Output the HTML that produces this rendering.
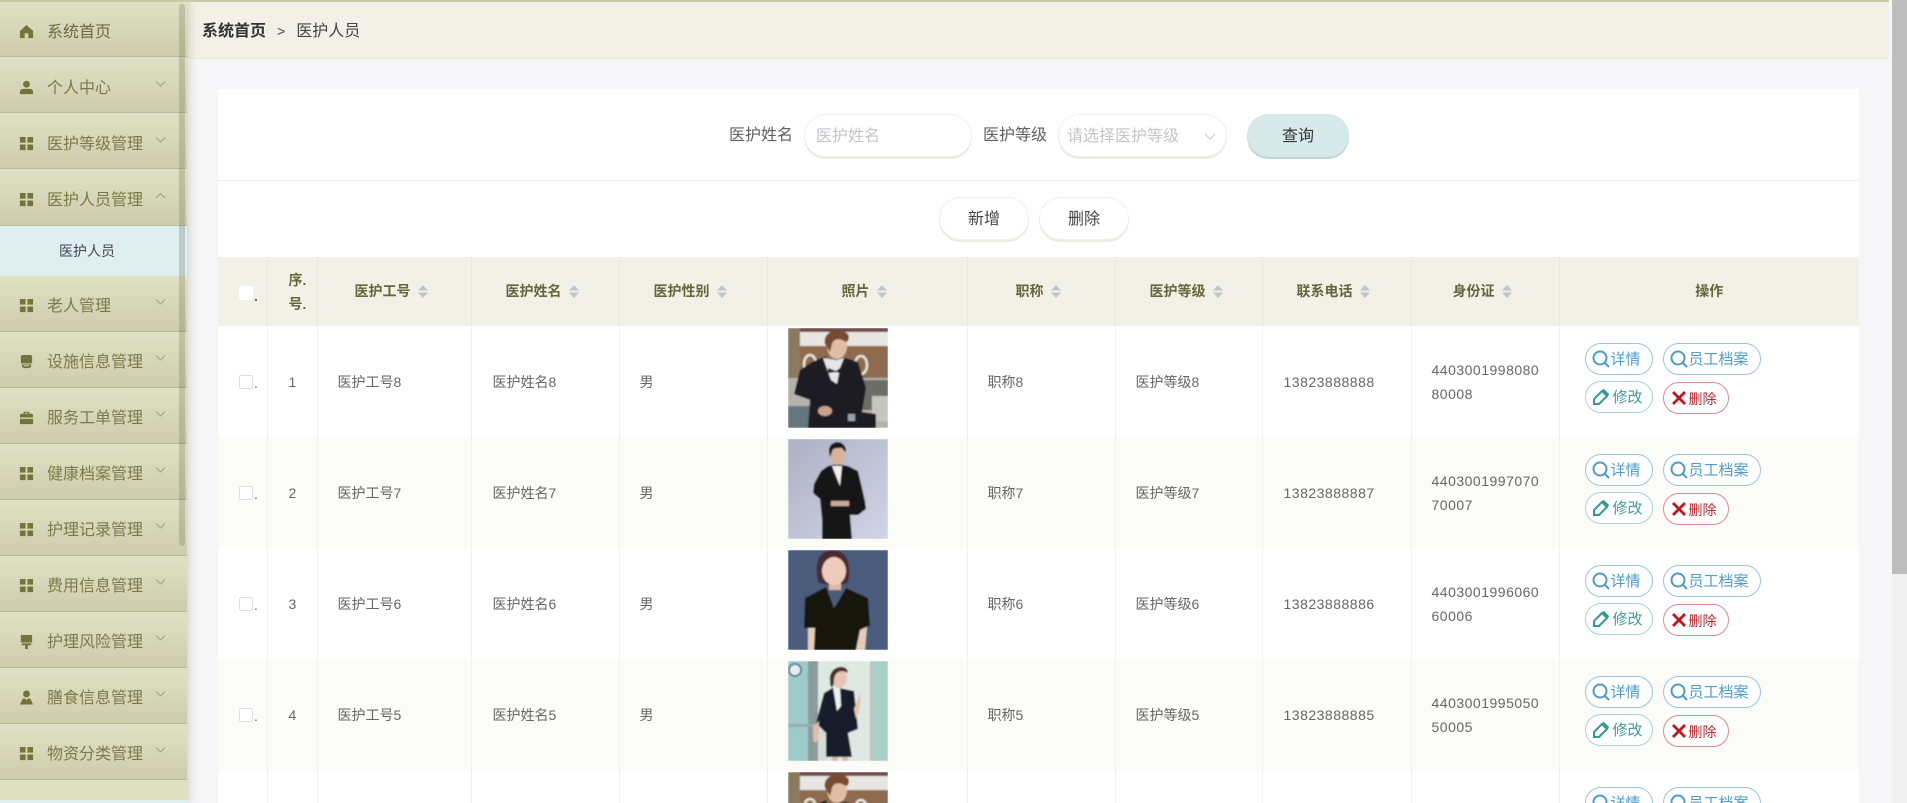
<!DOCTYPE html>
<html lang="zh">
<head>
<meta charset="utf-8">
<title>医护人员</title>
<style>
*{box-sizing:border-box}
html,body{margin:0;padding:0;width:1907px;height:803px;overflow:hidden;background:#f5f5f8;font-family:"Liberation Sans","Noto Sans CJK SC",sans-serif;color:#666}
#wrap{position:absolute;left:0;top:0;width:1907px;height:803px;overflow:hidden;background:#f6f6f8}
.abs{position:absolute}
#side{position:absolute;left:0;top:0;width:187px;height:803px;overflow:hidden;background:#dfdfc2;box-shadow:2px 0 8px rgba(120,120,90,.3);z-index:5}
.mi{position:absolute;left:0;width:187px;height:56px;background:linear-gradient(#e0e0c4,#cdcdad);border-bottom:1px solid #b9b998;font-size:16px;color:#7b7b47;line-height:64px;padding-left:47px;white-space:nowrap;overflow:hidden}
.mi svg.ic{position:absolute;left:19px;top:23px;width:15px;height:15px;fill:#74733a}
.mi svg.ar{position:absolute;left:155px;top:23px;width:11px;height:8px;fill:none;stroke:#a3a37c;stroke-width:1}
.mi.l{line-height:62px}
.mi.l svg.ic{top:22px}
.mi.l svg.ar{top:22px}
#sbar{position:absolute;left:179px;top:4px;width:6px;height:542px;background:rgba(110,110,90,.28);border-radius:3px}
#top{position:absolute;left:0;top:0;width:1889px;height:2px;background:#c9caa4;z-index:6}
#hd{position:absolute;left:187px;top:2px;width:1702px;height:57px;background:#f1f1e8;border-bottom:1px solid #eaeae2;font-size:16px;line-height:58px;color:#444;padding-left:15px;white-space:nowrap;overflow:hidden}
#hd b{color:#333}
#hd i{font-style:normal;font-size:14px;margin:0 11px 0 11px}
#card{position:absolute;left:218px;top:89px;width:1641px;height:714px;background:#fff;border:0}
.inp{position:absolute;height:43px;background:#fff;border:1px solid #f0f0ea;border-radius:22px;box-shadow:0 2px 0 #ebebdf;font-size:16px;line-height:43px;color:#c3c5ca;white-space:nowrap}
.lb{position:absolute;font-size:16px;color:#606060;line-height:24px;white-space:nowrap}
.btn{position:absolute;height:43px;background:#fff;border:1px solid #f0f0ea;border-radius:22px;box-shadow:0 2px 0 #ebebdf;font-size:16px;line-height:43px;text-align:center;color:#444}
table{position:absolute;left:218px;top:257px;width:1641px;border-collapse:collapse;table-layout:fixed;z-index:2}
th{height:69px;background:#f1f1e8;border-right:1px solid #e7e7dc;font-size:14px;font-weight:bold;color:#66663a;text-align:left;padding:0 0 2px 0;white-space:nowrap;line-height:24px}
td{height:111px;border-right:1px solid #f1f1ee;font-size:14px;color:#666;padding:0 0 0 20px;white-space:nowrap;line-height:24px;position:relative}
tr:nth-child(even) td{background:#fbfbf7}
th:last-child,td:last-child{border-right:0}
tr.cut td{height:33px}
.so{display:inline-block;vertical-align:-2px;margin-left:7px;width:10px;height:13px}
.so svg{display:block;fill:#c0c4cc}
.cb{position:absolute;left:21px;width:14px;height:14px;border:1px solid #dcdfe6;border-radius:2px;background:#fff}
.dt{position:absolute;left:36px;color:#666}
.ls{letter-spacing:.5px}
.ph{position:absolute;left:20px;top:2px;width:100px;height:100px;display:block}
.bb{position:absolute;height:32px;border:1px solid;border-radius:16px;background:#fff;font-size:15px;line-height:32px;white-space:nowrap}
.bb svg{position:absolute;left:6px;top:6px;width:18px;height:18px;fill:none}
.bb span{position:absolute;left:25px;top:0}
.b1{left:25px;width:68px;border-color:#9cc6d8;color:#4e9ccb}
.b2{left:103px;width:98px;border-color:#9cc6d8;color:#4e9ccb}
.b3{left:25px;width:68px;border-color:#a9d3d6;color:#3f9c98}
.b3 span{left:27px}
.b4{left:103px;width:66px;border-color:#d98c92;color:#b32a30;font-size:14px}
.clip{position:absolute;left:0;top:0;width:299px;height:33px;overflow:hidden}
#vb{position:absolute;left:1892px;top:0;width:15px;height:803px;background:#f1f1f1}
#vt{position:absolute;left:1892px;top:0;width:15px;height:574px;background:#bdbdbd}
</style>
</head>
<body>
<div id="wrap">
<div id="top"></div>

<div id="side">
  <div class="mi" style="top:3px;height:54px;line-height:60px;color:#6b6b3b;"><svg class="ic" viewBox="0 0 16 16" style="top:21px"><path d="M8 1 1 7.500V15h5v-5h4v5h5V7.500z"/></svg>系统首页</div>
  <div class="mi" style="top:57px"><svg class="ic" viewBox="0 0 16 16"><circle cx="8" cy="4.500" r="3.600"/><path d="M1 15v-2.500C1 10.500 3 9.500 5 9.500h6c2 0 4 1 4 3V15z"/></svg>个人中心<svg class="ar" viewBox="0 0 11 8"><path d="M1 1.500 5.500 6 10 1.500"/></svg></div>
  <div class="mi" style="top:113px"><svg class="ic" viewBox="0 0 16 16"><path d="M1 1h6v6H1zM9 1h6v6H9zM1 9h6v6H1zM9 9h6v6H9z"/></svg>医护等级管理<svg class="ar" viewBox="0 0 11 8"><path d="M1 1.500 5.500 6 10 1.500"/></svg></div>
  <div class="mi" style="top:169px;height:57px"><svg class="ic" viewBox="0 0 16 16"><path d="M1 1h6v6H1zM9 1h6v6H9zM1 9h6v6H1zM9 9h6v6H9z"/></svg>医护人员管理<svg class="ar" viewBox="0 0 11 8"><path d="M1 6 5.500 1.500 10 6"/></svg></div>
  <div class="abs" style="left:0;top:226px;width:187px;height:50px;background:#deeef1;font-size:14px;line-height:50px;padding-left:59px;color:#445">医护人员</div>
  <div class="mi l" style="top:276px"><svg class="ic" viewBox="0 0 16 16"><path d="M1 1h6v6H1zM9 1h6v6H9zM1 9h6v6H1zM9 9h6v6H9z"/></svg>老人管理<svg class="ar" viewBox="0 0 11 8"><path d="M1 1.500 5.500 6 10 1.500"/></svg></div>
  <div class="mi l" style="top:332px"><svg class="ic" viewBox="0 0 16 16"><path d="M2 3c0-1 1-2 2-2h8c1 0 2 1 2 2v7H2zM3 11h10v1c0 2-1 3-3 3H6c-2 0-3-1-3-3zM5 12v1h6v-1z"/></svg>设施信息管理<svg class="ar" viewBox="0 0 11 8"><path d="M1 1.500 5.500 6 10 1.500"/></svg></div>
  <div class="mi l" style="top:388px"><svg class="ic" viewBox="0 0 16 16"><path d="M5 4V2h6v2h2.500L15 5v3H1V5l1.500-1zM6.500 4h3V3h-3zM1 9.500h14V15H1z"/></svg>服务工单管理<svg class="ar" viewBox="0 0 11 8"><path d="M1 1.500 5.500 6 10 1.500"/></svg></div>
  <div class="mi l" style="top:444px"><svg class="ic" viewBox="0 0 16 16"><path d="M1 1h6v6H1zM9 1h6v6H9zM1 9h6v6H1zM9 9h6v6H9z"/></svg>健康档案管理<svg class="ar" viewBox="0 0 11 8"><path d="M1 1.500 5.500 6 10 1.500"/></svg></div>
  <div class="mi l" style="top:500px"><svg class="ic" viewBox="0 0 16 16"><path d="M1 1h6v6H1zM9 1h6v6H9zM1 9h6v6H1zM9 9h6v6H9z"/></svg>护理记录管理<svg class="ar" viewBox="0 0 11 8"><path d="M1 1.500 5.500 6 10 1.500"/></svg></div>
  <div class="mi l" style="top:556px"><svg class="ic" viewBox="0 0 16 16"><path d="M1 1h6v6H1zM9 1h6v6H9zM1 9h6v6H1zM9 9h6v6H9z"/></svg>费用信息管理<svg class="ar" viewBox="0 0 11 8"><path d="M1 1.500 5.500 6 10 1.500"/></svg></div>
  <div class="mi l" style="top:612px"><svg class="ic" viewBox="0 0 16 16"><path d="M2 1h12v8H2zM3 10h10v2H9.500v4h-3v-4H3z"/></svg>护理风险管理<svg class="ar" viewBox="0 0 11 8"><path d="M1 1.500 5.500 6 10 1.500"/></svg></div>
  <div class="mi l" style="top:668px"><svg class="ic" viewBox="0 0 16 16"><circle cx="8" cy="4.200" r="3.700"/><path d="M1 15.500 4 9h2.500L8 11l1.500-2H12l3 6.500z"/></svg>膳食信息管理<svg class="ar" viewBox="0 0 11 8"><path d="M1 1.500 5.500 6 10 1.500"/></svg></div>
  <div class="mi l" style="top:724px"><svg class="ic" viewBox="0 0 16 16"><path d="M1 1h6v6H1zM9 1h6v6H9zM1 9h6v6H1zM9 9h6v6H9z"/></svg>物资分类管理<svg class="ar" viewBox="0 0 11 8"><path d="M1 1.500 5.500 6 10 1.500"/></svg></div>
  <div class="abs" style="left:0;top:780px;width:187px;height:20px;background:#dfdfc2"></div>
  <div class="abs" style="left:0;top:800px;width:187px;height:3px;background:#deeef1"></div>
  <div id="sbar"></div>
</div>

<div id="hd"><b>系统首页</b><i>&gt;</i>医护人员</div>

<div id="card">
  <div class="abs" style="left:0;top:91px;width:1641px;height:1px;background:#eeeeee"></div>
</div>

<div class="lb" style="left:729px;top:124px">医护姓名</div>
<div class="inp" style="left:804px;top:114px;width:168px;padding-left:11px">医护姓名</div>
<div class="lb" style="left:983px;top:124px">医护等级</div>
<div class="inp" style="left:1058px;top:114px;width:169px;padding-left:8px">请选择医护等级
  <svg class="abs" style="left:145px;top:17px;width:12px;height:9px;fill:none;stroke:#c3c5ca;stroke-width:1" viewBox="0 0 12 9"><path d="M1 2 6 7 11 2"/></svg>
</div>
<div class="btn" style="left:1247px;top:114px;width:102px;background:#d8e9ea;border-color:#d5e6e7;box-shadow:0 2px 0 #b9d5d7;color:#333">查询</div>

<div class="btn" style="left:939px;top:197px;width:90px">新增</div>
<div class="btn" style="left:1039px;top:197px;width:90px">删除</div>

<table>
<colgroup>
<col style="width:49px"><col style="width:50px"><col style="width:154px"><col style="width:148px"><col style="width:148px"><col style="width:200px"><col style="width:148px"><col style="width:147px"><col style="width:149px"><col style="width:148px"><col style="width:300px">
</colgroup>
<thead>
<tr>
<th style="position:relative"><div class="cb" style="top:29px;border-color:#fff"></div><span class="dt" style="top:27px">.</span></th>
<th style="padding:0 0 0 21px;white-space:normal">序.<br>号.</th>
<th style="padding-left:37px">医护工号<span class="so"><svg width="10" height="13" viewBox="0 0 10 13"><path d="M5 0 10 5.500H0zM0 7.500H10L5 13z"/></svg></span></th>
<th style="padding-left:34px">医护姓名<span class="so"><svg width="10" height="13" viewBox="0 0 10 13"><path d="M5 0 10 5.500H0zM0 7.500H10L5 13z"/></svg></span></th>
<th style="padding-left:34px">医护性别<span class="so"><svg width="10" height="13" viewBox="0 0 10 13"><path d="M5 0 10 5.500H0zM0 7.500H10L5 13z"/></svg></span></th>
<th style="padding-left:74px">照片<span class="so"><svg width="10" height="13" viewBox="0 0 10 13"><path d="M5 0 10 5.500H0zM0 7.500H10L5 13z"/></svg></span></th>
<th style="padding-left:48px">职称<span class="so"><svg width="10" height="13" viewBox="0 0 10 13"><path d="M5 0 10 5.500H0zM0 7.500H10L5 13z"/></svg></span></th>
<th style="padding-left:34px">医护等级<span class="so"><svg width="10" height="13" viewBox="0 0 10 13"><path d="M5 0 10 5.500H0zM0 7.500H10L5 13z"/></svg></span></th>
<th style="padding-left:34px">联系电话<span class="so"><svg width="10" height="13" viewBox="0 0 10 13"><path d="M5 0 10 5.500H0zM0 7.500H10L5 13z"/></svg></span></th>
<th style="padding-left:41px">身份证<span class="so"><svg width="10" height="13" viewBox="0 0 10 13"><path d="M5 0 10 5.500H0zM0 7.500H10L5 13z"/></svg></span></th>
<th style="text-align:center">操作</th>
</tr>
</thead>
<tbody>
<tr>
<td><div class="cb" style="top:49px"></div><span class="dt" style="top:45px">.</span></td>
<td style="padding-left:21px">1</td><td>医护工号8</td><td style="padding-left:21px">医护姓名8</td><td>男</td>
<td><svg class="ph" viewBox="0 0 100 100"><defs><filter id="bl"><feGaussianBlur stdDeviation=".7"/></filter></defs><g filter="url(#bl)"><rect width="100" height="100" fill="#8f7a66"/><rect width="100" height="4" fill="#6f4a48"/><rect y="4" width="100" height="14" fill="#e8e6e2"/><rect y="18" width="100" height="32" fill="#8f6a4e"/><rect width="12" height="50" fill="#8a7a5e"/><rect y="50" width="100" height="50" fill="#b5b2ac"/><rect y="78" width="25" height="22" fill="#65767e"/><rect x="68" y="52" width="32" height="30" fill="#6d6d68"/><rect x="84" y="68" width="16" height="25" fill="#c9c6c0"/><ellipse cx="22" cy="36" rx="6" ry="9" fill="none" stroke="#e8e4dc" stroke-width="2.500"/><ellipse cx="73" cy="37" rx="6" ry="9" fill="none" stroke="#e8e4dc" stroke-width="2.500"/><path d="M38 28 42 42 48 30 58 30 70 34 78 60 74 84 88 86 88 100H20L22 72 6 66 12 42 24 34z" fill="#1a1b20"/><path d="M35 30 43 52 49 56 52 40 56 30 48 32z" fill="#e4e6ea"/><path d="M40 40 48 43 52 40 52 45 48 44 40 45z" fill="#15151c"/><ellipse cx="49" cy="18" rx="10" ry="13" fill="#e2bda6"/><path d="M37 16C34 4 50-2 60 6 62 10 60 14 58 14 52 10 46 10 44 16L42 24z" fill="#7a4a30"/><rect x="60" y="86" width="7" height="7" fill="#99a0a4"/><ellipse cx="37" cy="83" rx="7" ry="5" fill="#c9a28e"/></g></svg></td>
<td>职称8</td><td style="padding-left:20px">医护等级8</td><td class="ls" style="padding-left:21px">13823888888</td>
<td class="ls">4403001998080<br>80008</td>
<td>
<a class="bb b1" style="top:17px"><svg viewBox="0 0 18 18" stroke="#4d9bcb" stroke-width="2"><circle cx="8" cy="8" r="6.500"/><path d="M12.500 12.500 17 17"/></svg><span>详情</span></a>
<a class="bb b2" style="top:17px"><svg viewBox="0 0 18 18" stroke="#4d9bcb" stroke-width="2"><circle cx="8" cy="8" r="6.500"/><path d="M12.500 12.500 17 17"/></svg><span>员工档案</span></a>
<a class="bb b3" style="top:55px"><svg viewBox="0 0 18 18" stroke="#2f9a92" stroke-width="2"><path d="M2 16V11L10 3 15 8 7 16zM11 1.500 16.500 7"/></svg><span>修改</span></a>
<a class="bb b4" style="top:56px"><svg viewBox="0 0 18 18" stroke="#c1151c" stroke-width="2.800"><path d="M3 3 15 15M15 3 3 15"/></svg><span>删除</span></a>
</td>
</tr>
<tr>
<td><div class="cb" style="top:49px"></div><span class="dt" style="top:45px">.</span></td>
<td style="padding-left:21px">2</td><td>医护工号7</td><td style="padding-left:21px">医护姓名7</td><td>男</td>
<td><svg class="ph" viewBox="0 0 100 100"><defs><linearGradient id="g2" x1="0" y1="0" x2="1" y2="1"><stop offset="0" stop-color="#adb0c4"/><stop offset="1" stop-color="#d2d4e6"/></linearGradient></defs><g filter="url(#bl)"><rect width="100" height="100" fill="url(#g2)"/><path d="M40 27 49 25 60 27 70 32 77 62 78 70 70 76 62 76 64 100H34L34 80 32 60 25 54 26 45 33 32z" fill="#121217"/><path d="M44 27 54 27 52 47z" fill="#f2eeea"/><ellipse cx="49" cy="15" rx="7.500" ry="11" fill="#d8b39b"/><path d="M41 13C40 0 58 0 58 12 58 14 56 12 54 9 48 9 44 9 44 13L42 18z" fill="#16161a"/><rect x="43" y="62" width="18" height="5" fill="#c9a896"/></g></svg></td>
<td>职称7</td><td style="padding-left:20px">医护等级7</td><td class="ls" style="padding-left:21px">13823888887</td>
<td class="ls">4403001997070<br>70007</td>
<td>
<a class="bb b1" style="top:17px"><svg viewBox="0 0 18 18" stroke="#4d9bcb" stroke-width="2"><circle cx="8" cy="8" r="6.500"/><path d="M12.500 12.500 17 17"/></svg><span>详情</span></a>
<a class="bb b2" style="top:17px"><svg viewBox="0 0 18 18" stroke="#4d9bcb" stroke-width="2"><circle cx="8" cy="8" r="6.500"/><path d="M12.500 12.500 17 17"/></svg><span>员工档案</span></a>
<a class="bb b3" style="top:55px"><svg viewBox="0 0 18 18" stroke="#2f9a92" stroke-width="2"><path d="M2 16V11L10 3 15 8 7 16zM11 1.500 16.500 7"/></svg><span>修改</span></a>
<a class="bb b4" style="top:56px"><svg viewBox="0 0 18 18" stroke="#c1151c" stroke-width="2.800"><path d="M3 3 15 15M15 3 3 15"/></svg><span>删除</span></a>
</td>
</tr>
<tr>
<td><div class="cb" style="top:49px"></div><span class="dt" style="top:45px">.</span></td>
<td style="padding-left:21px">3</td><td>医护工号6</td><td style="padding-left:21px">医护姓名6</td><td>男</td>
<td><svg class="ph" viewBox="0 0 100 100"><g filter="url(#bl)"><rect width="100" height="100" fill="#485b7b"/><path d="M30 32C26 10 32 0 45 0 58 0 64 12 60 33 52 36 38 36 30 32z" fill="#4a2a33"/><rect x="41" y="30" width="12" height="10" fill="#e0b8a6"/><ellipse cx="46" cy="21" rx="12" ry="14" fill="#efcbbb"/><path d="M38 37 17 48 16 78 25 78 25 100H73L74 78 82 76 80 48 58 38 50 52 46 58z" fill="#15140f"/><path d="M20 78H27L26 100H20zM72 80 68 100H77L79 77z" fill="#e6cdb9"/></g></svg></td>
<td>职称6</td><td style="padding-left:20px">医护等级6</td><td class="ls" style="padding-left:21px">13823888886</td>
<td class="ls">4403001996060<br>60006</td>
<td>
<a class="bb b1" style="top:17px"><svg viewBox="0 0 18 18" stroke="#4d9bcb" stroke-width="2"><circle cx="8" cy="8" r="6.500"/><path d="M12.500 12.500 17 17"/></svg><span>详情</span></a>
<a class="bb b2" style="top:17px"><svg viewBox="0 0 18 18" stroke="#4d9bcb" stroke-width="2"><circle cx="8" cy="8" r="6.500"/><path d="M12.500 12.500 17 17"/></svg><span>员工档案</span></a>
<a class="bb b3" style="top:55px"><svg viewBox="0 0 18 18" stroke="#2f9a92" stroke-width="2"><path d="M2 16V11L10 3 15 8 7 16zM11 1.500 16.500 7"/></svg><span>修改</span></a>
<a class="bb b4" style="top:56px"><svg viewBox="0 0 18 18" stroke="#c1151c" stroke-width="2.800"><path d="M3 3 15 15M15 3 3 15"/></svg><span>删除</span></a>
</td>
</tr>
<tr>
<td><div class="cb" style="top:49px"></div><span class="dt" style="top:45px">.</span></td>
<td style="padding-left:21px">4</td><td>医护工号5</td><td style="padding-left:21px">医护姓名5</td><td>男</td>
<td><svg class="ph" viewBox="0 0 100 100"><g filter="url(#bl)"><rect width="100" height="100" fill="#dfe9e4"/><rect width="22" height="100" fill="#9dcbc9"/><rect x="20" width="10" height="100" fill="#8b9a9c"/><rect y="63" width="30" height="3" fill="#9aa"/><rect x="30" y="58" width="10" height="42" fill="#d8dcd8"/><rect x="84" width="16" height="100" fill="#a9d0c6"/><rect x="82" width="3" height="100" fill="#b9c4c0"/><circle cx="7" cy="9" r="6" fill="#e6eef0" stroke="#2a5c7c" stroke-width="1.500"/><path d="M36 32 46 26 66 30 70 68 60 72 64 96H38L38 72 28 62z" fill="#121a2a"/><path d="M45 26 52 26 53 45 49 50z" fill="#eef1f4"/><path d="M44 96H50V100H44zM54 96H60V100H54z" fill="#d8b8a4"/><path d="M25 65 31 60 30 78 28 82 25 80z" fill="#dcbca8"/><path d="M70 38 73 30 72 46 68 58 66 48z" fill="#e2c4b0"/><ellipse cx="51" cy="17" rx="8" ry="10" fill="#e8c5b2"/><path d="M42 20C40 4 60 2 60 12 54 8 46 10 46 20 46 26 42 30 42 20z" fill="#44302a"/></g></svg></td>
<td>职称5</td><td style="padding-left:20px">医护等级5</td><td class="ls" style="padding-left:21px">13823888885</td>
<td class="ls">4403001995050<br>50005</td>
<td>
<a class="bb b1" style="top:17px"><svg viewBox="0 0 18 18" stroke="#4d9bcb" stroke-width="2"><circle cx="8" cy="8" r="6.500"/><path d="M12.500 12.500 17 17"/></svg><span>详情</span></a>
<a class="bb b2" style="top:17px"><svg viewBox="0 0 18 18" stroke="#4d9bcb" stroke-width="2"><circle cx="8" cy="8" r="6.500"/><path d="M12.500 12.500 17 17"/></svg><span>员工档案</span></a>
<a class="bb b3" style="top:55px"><svg viewBox="0 0 18 18" stroke="#2f9a92" stroke-width="2"><path d="M2 16V11L10 3 15 8 7 16zM11 1.500 16.500 7"/></svg><span>修改</span></a>
<a class="bb b4" style="top:56px"><svg viewBox="0 0 18 18" stroke="#c1151c" stroke-width="2.800"><path d="M3 3 15 15M15 3 3 15"/></svg><span>删除</span></a>
</td>
</tr>
<tr class="cut">
<td></td><td></td><td></td><td></td><td></td>
<td><svg class="ph" style="height:31px" viewBox="0 0 100 31"><g filter="url(#bl)"><rect width="100" height="50" fill="#8f7a66"/><rect width="100" height="4" fill="#6f4a48"/><rect y="4" width="100" height="14" fill="#e8e6e2"/><rect y="18" width="100" height="32" fill="#8f6a4e"/><rect width="12" height="50" fill="#8a7a5e"/><ellipse cx="22" cy="36" rx="6" ry="9" fill="none" stroke="#e8e4dc" stroke-width="2.500"/><ellipse cx="73" cy="37" rx="6" ry="9" fill="none" stroke="#e8e4dc" stroke-width="2.500"/><path d="M38 28 42 42 48 30 58 30 70 34 78 60H6L12 42 24 34z" fill="#1a1b20"/><ellipse cx="49" cy="18" rx="10" ry="13" fill="#e2bda6"/><path d="M37 16C34 4 50-2 60 6 62 10 60 14 58 14 52 10 46 10 44 16L42 24z" fill="#7a4a30"/></g></svg></td>
<td></td><td></td><td></td><td></td>
<td><div class="clip">
<a class="bb b1" style="top:17px"><svg viewBox="0 0 18 18" stroke="#4d9bcb" stroke-width="2"><circle cx="8" cy="8" r="6.500"/><path d="M12.500 12.500 17 17"/></svg><span>详情</span></a>
<a class="bb b2" style="top:17px"><svg viewBox="0 0 18 18" stroke="#4d9bcb" stroke-width="2"><circle cx="8" cy="8" r="6.500"/><path d="M12.500 12.500 17 17"/></svg><span>员工档案</span></a>
</div></td>
</tr>
</tbody>
</table>

<div id="vb"></div>
<div id="vt"></div>
</div>
</body>
</html>
